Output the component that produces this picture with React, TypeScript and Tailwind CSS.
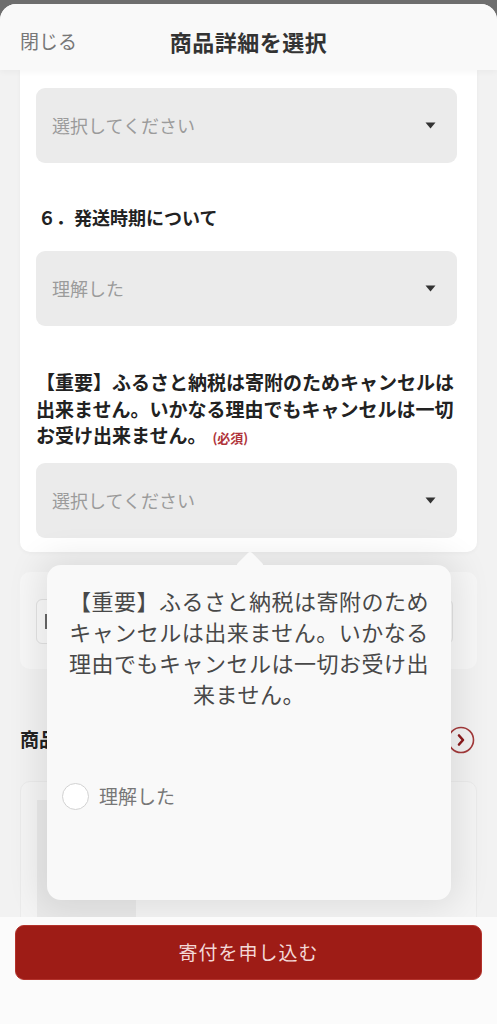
import React from 'react';

const Caret = () => (
  <svg width="11" height="7" viewBox="0 0 11 7" className="shrink-0">
    <path d="M0.5 0.5 H10.5 L5.5 6.5 Z" fill="#333" />
  </svg>
);

const SelectBox = ({ value }: { value: string }) => (
  <div className="h-[75px] rounded-[9px] bg-[#ebebeb] flex items-center justify-between pl-[16px] pr-[21px]">
    <span className="text-[18px] text-[#9b9b9b]">{value}</span>
    <Caret />
  </div>
);

const CircleArrow = () => (
  <svg width="28" height="28" viewBox="0 0 28 28">
    <circle cx="14" cy="14" r="12.5" fill="none" stroke="#a3393a" strokeWidth="1.6" />
    <path d="M12 9.5 L16 14 L12 18.5" fill="none" stroke="#8a1a1d" strokeWidth="2.6" strokeLinecap="round" strokeLinejoin="round" />
  </svg>
);

const App = () => {
  return (
    <div className="w-[497px] h-[1024px] overflow-hidden bg-[#6e6e6e] font-['Noto_Sans_CJK_JP',sans-serif]">
      <div className="mt-[4px] h-[1020px] rounded-t-[16px] overflow-hidden bg-[#f2f2f2] flex flex-col">
        {/* header */}
        <div className="h-[66px] shrink-0 bg-[#f9f9f9] grid grid-cols-[1fr_auto_1fr] items-center pt-[8px] shadow-[0_2px_6px_rgba(0,0,0,0.04)] relative z-10">
          <span className="pl-[20px] text-[19px] text-[#777]">閉じる</span>
          <span className="text-[22px] font-bold text-[#333] tracking-[0.5px]">商品詳細を選択</span>
          <span />
        </div>

        {/* scroll area */}
        <div className="relative flex-1 overflow-hidden">
          <div className="flex flex-col">
            {/* card 1 */}
            <div className="mx-[20px] bg-white rounded-b-[10px] pl-[16px] pr-[20px] pt-[18px] pb-[14px] shadow-[0_1px_4px_rgba(0,0,0,0.04)]">
              <SelectBox value="選択してください" />
              <div className="mt-[41px] pl-[2px] text-[18px] leading-[26px] font-bold text-[#222]">６．発送時期について</div>
              <div className="mt-[21px]">
                <SelectBox value="理解した" />
              </div>
              <p className="mt-[43px] text-[19px] leading-[26.5px] font-bold text-[#222]">
                【重要】ふるさと納税は寄附のためキャンセルは出来ません。いかなる理由でもキャンセルは一切お受け出来ません。
                <span className="inline-block ml-[6px] text-[13px] leading-[20px] text-[#b0343a]">(必須)</span>
              </p>
              <div className="mt-[14px]">
                <SelectBox value="選択してください" />
              </div>
            </div>

            {/* card 2 */}
            <div className="mx-[20px] mt-[20px] bg-[#f7f7f7] rounded-[10px] pl-[16px] pr-[24px] pt-[27px] pb-[25px]">
              <div className="h-[45px] rounded-[6px] border border-[#e2e2e2] bg-[#f9f9f9] flex items-center pl-[8px]">
                <span className="w-[2px] h-[15px] bg-[#666]" />
              </div>
            </div>

            {/* section title */}
            <div className="mt-[56px] pl-[20px] pr-[22px] h-[30px] flex items-center justify-between">
              <span className="text-[19px] font-bold text-[#222]">商品情報</span>
              <CircleArrow />
            </div>

            {/* card 3 */}
            <div className="mx-[20px] mt-[26px] bg-[#f4f4f4] rounded-[10px] px-[16px] pt-[18px] h-[200px] border border-[#ebebeb]">
              <div className="w-[99px] h-[160px] bg-[#e9e9e9]" />
            </div>
          </div>

          {/* popup */}
          <div className="absolute left-[47px] top-[495px] w-[404px] h-[335px] rounded-[14px] bg-[#f9f9f9] shadow-[0_0_34px_8px_rgba(0,0,0,0.09)] z-20">
            <div className="absolute left-[193px] top-[-10px] w-[20px] h-[20px] rotate-45 rounded-[3px] bg-[#f9f9f9]" />
            <div className="relative px-[21px] pt-[20px] text-center text-[22px] leading-[31px] tracking-[0.5px] text-[#484848]">
              【重要】ふるさと納税は寄附のためキャンセルは出来ません。いかなる理由でもキャンセルは一切お受け出来ません。
            </div>
            <div className="relative mt-[73px] pl-[15px] flex items-center gap-[10px]">
              <span className="w-[27px] h-[27px] rounded-full border-[1.5px] border-[#d2d2d2] bg-white" />
              <span className="text-[19px] text-[#777]">理解した</span>
            </div>
          </div>
        </div>

        {/* bottom bar */}
        <div className="h-[107px] shrink-0 bg-[#fbfbfb] px-[15px] pt-[8px]">
          <button className="w-full h-[55px] rounded-[9px] bg-[#9e1c16] border border-[#b3322b] text-[19px] text-[#f3d8d6] tracking-[1px]">
            寄付を申し込む
          </button>
        </div>
      </div>
    </div>
  );
};

export default App;
